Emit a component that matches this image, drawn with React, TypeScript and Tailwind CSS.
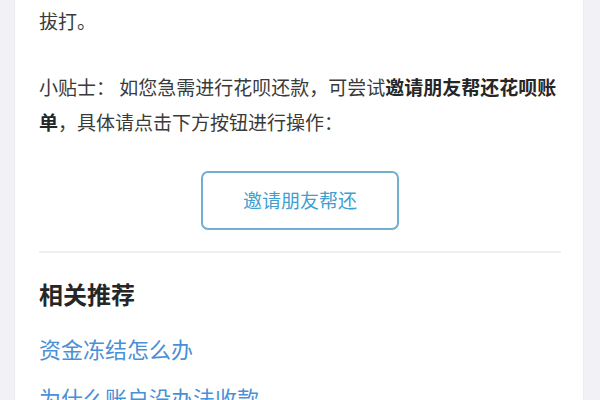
import React from "react";

export default function App() {
  const font = { fontFamily: '"Noto Sans CJK SC", "Noto Sans", sans-serif' };
  return (
    <div
      className="w-[600px] h-[400px] overflow-hidden bg-[#f1f1f6] pl-[14px] pr-[16px]"
      style={font}
    >
      <div className="h-full flex flex-col bg-white border-x border-[#ebebf0] pl-[24px] pr-[22px]">
        <div className="shrink-0 mt-[-32px] text-[19px] leading-[35px] text-[#3a3a3a]">
          <div className="whitespace-nowrap overflow-hidden">
            如您还有其他疑问，可以联系在线客服进行咨询，或者致电客服热线进行
          </div>
          <div>拔打。</div>
        </div>
        <p className="shrink-0 mt-[31px] text-[19px] leading-[35px] text-[#3a3a3a]">
          小贴士： 如您急需进行花呗还款，可尝试
          <span className="font-bold text-[#262626]">邀请朋友帮还花呗账单</span>
          ，具体请点击下方按钮进行操作：
        </p>
        <div className="shrink-0 mt-[32px] flex justify-center">
          <button className="w-[198px] h-[59px] rounded-[7px] border-2 border-[#6fb0cf] bg-white text-[19px] text-[#3f9fd0] flex items-center justify-center">
            邀请朋友帮还
          </button>
        </div>
        <div className="shrink-0 mt-[21px] h-[2px] bg-[#f0f0f3]" />
        <h2 className="shrink-0 mt-[24px] text-[24px] leading-[34px] font-bold text-[#262626]">
          相关推荐
        </h2>
        <div className="shrink-0 mt-[20px] flex flex-col gap-[15px]">
          <div className="text-[22px] leading-[34px] text-[#4a90d6]">资金冻结怎么办</div>
          <div className="text-[22px] leading-[34px] text-[#4a90d6]">为什么账户没办法收款</div>
        </div>
      </div>
    </div>
  );
}
